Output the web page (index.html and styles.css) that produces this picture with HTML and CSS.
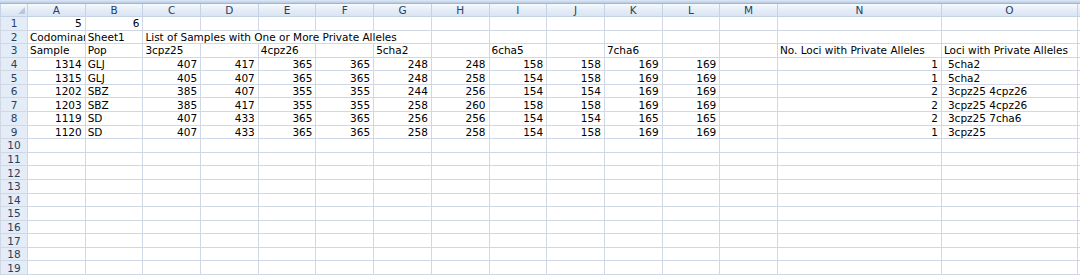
FILE: index.html
```html
<!DOCTYPE html>
<html>
<head>
<meta charset="utf-8">
<link rel="stylesheet" href="styles.css">
</head>
<body>
<div class="sheet">
  <div class="topband"></div>
  <table class="grid">
    <colgroup>
      <col class="c-rh"><col class="c-n"><col class="c-n"><col class="c-n"><col class="c-n"><col class="c-n"><col class="c-n"><col class="c-n"><col class="c-n"><col class="c-n"><col class="c-n"><col class="c-n"><col class="c-n"><col class="c-n"><col class="c-wn"><col class="c-wo"><col class="c-rest">
    </colgroup>
    <thead>
      <tr class="hdr">
        <th class="corner"><span class="tri"></span></th>
        <th>A</th><th>B</th><th>C</th><th>D</th><th>E</th><th>F</th><th>G</th><th>H</th><th>I</th><th>J</th><th>K</th><th>L</th><th>M</th><th>N</th><th>O</th><th></th>
      </tr>
    </thead>
    <tbody>
      <tr><th>1</th><td class="r">5</td><td class="r">6</td><td></td><td></td><td></td><td></td><td></td><td></td><td></td><td></td><td></td><td></td><td></td><td></td><td></td><td></td></tr>
      <tr><th>2</th><td class="clip">Codominant</td><td>Sheet1</td><td colspan="5">List of Samples with One or More Private Alleles</td><td></td><td></td><td></td><td></td><td></td><td></td><td></td><td></td><td></td></tr>
      <tr><th>3</th><td>Sample</td><td>Pop</td><td>3cpz25</td><td></td><td>4cpz26</td><td></td><td>5cha2</td><td></td><td>6cha5</td><td></td><td>7cha6</td><td></td><td></td><td>No. Loci with Private Alleles</td><td>Loci with Private Alleles</td><td></td></tr>
      <tr><th>4</th><td class="r">1314</td><td>GLJ</td><td class="r">407</td><td class="r">417</td><td class="r">365</td><td class="r">365</td><td class="r">248</td><td class="r">248</td><td class="r">158</td><td class="r">158</td><td class="r">169</td><td class="r">169</td><td></td><td class="r">1</td><td class="sp">5cha2</td><td></td></tr>
      <tr><th>5</th><td class="r">1315</td><td>GLJ</td><td class="r">405</td><td class="r">407</td><td class="r">365</td><td class="r">365</td><td class="r">248</td><td class="r">258</td><td class="r">154</td><td class="r">158</td><td class="r">169</td><td class="r">169</td><td></td><td class="r">1</td><td class="sp">5cha2</td><td></td></tr>
      <tr><th>6</th><td class="r">1202</td><td>SBZ</td><td class="r">385</td><td class="r">407</td><td class="r">355</td><td class="r">355</td><td class="r">244</td><td class="r">256</td><td class="r">154</td><td class="r">154</td><td class="r">169</td><td class="r">169</td><td></td><td class="r">2</td><td class="sp">3cpz25 4cpz26</td><td></td></tr>
      <tr><th>7</th><td class="r">1203</td><td>SBZ</td><td class="r">385</td><td class="r">417</td><td class="r">355</td><td class="r">355</td><td class="r">258</td><td class="r">260</td><td class="r">158</td><td class="r">158</td><td class="r">169</td><td class="r">169</td><td></td><td class="r">2</td><td class="sp">3cpz25 4cpz26</td><td></td></tr>
      <tr><th>8</th><td class="r">1119</td><td>SD</td><td class="r">407</td><td class="r">433</td><td class="r">365</td><td class="r">365</td><td class="r">256</td><td class="r">256</td><td class="r">154</td><td class="r">154</td><td class="r">165</td><td class="r">165</td><td></td><td class="r">2</td><td class="sp">3cpz25 7cha6</td><td></td></tr>
      <tr><th>9</th><td class="r">1120</td><td>SD</td><td class="r">407</td><td class="r">433</td><td class="r">365</td><td class="r">365</td><td class="r">258</td><td class="r">258</td><td class="r">154</td><td class="r">158</td><td class="r">169</td><td class="r">169</td><td></td><td class="r">1</td><td class="sp">3cpz25</td><td></td></tr>
      <tr><th>10</th><td></td><td></td><td></td><td></td><td></td><td></td><td></td><td></td><td></td><td></td><td></td><td></td><td></td><td></td><td></td><td></td></tr>
      <tr><th>11</th><td></td><td></td><td></td><td></td><td></td><td></td><td></td><td></td><td></td><td></td><td></td><td></td><td></td><td></td><td></td><td></td></tr>
      <tr><th>12</th><td></td><td></td><td></td><td></td><td></td><td></td><td></td><td></td><td></td><td></td><td></td><td></td><td></td><td></td><td></td><td></td></tr>
      <tr><th>13</th><td></td><td></td><td></td><td></td><td></td><td></td><td></td><td></td><td></td><td></td><td></td><td></td><td></td><td></td><td></td><td></td></tr>
      <tr><th>14</th><td></td><td></td><td></td><td></td><td></td><td></td><td></td><td></td><td></td><td></td><td></td><td></td><td></td><td></td><td></td><td></td></tr>
      <tr><th>15</th><td></td><td></td><td></td><td></td><td></td><td></td><td></td><td></td><td></td><td></td><td></td><td></td><td></td><td></td><td></td><td></td></tr>
      <tr><th>16</th><td></td><td></td><td></td><td></td><td></td><td></td><td></td><td></td><td></td><td></td><td></td><td></td><td></td><td></td><td></td><td></td></tr>
      <tr><th>17</th><td></td><td></td><td></td><td></td><td></td><td></td><td></td><td></td><td></td><td></td><td></td><td></td><td></td><td></td><td></td><td></td></tr>
      <tr><th>18</th><td></td><td></td><td></td><td></td><td></td><td></td><td></td><td></td><td></td><td></td><td></td><td></td><td></td><td></td><td></td><td></td></tr>
      <tr><th>19</th><td></td><td></td><td></td><td></td><td></td><td></td><td></td><td></td><td></td><td></td><td></td><td></td><td></td><td></td><td></td><td></td></tr>
    </tbody>
  </table>
</div>
</body>
</html>
```
FILE: styles.css
```css
html, body {
  margin: 0;
  padding: 0;
  background: #ffffff;
}
.sheet {
  width: 1080px;
  height: 277px;
  overflow: hidden;
  font-family: "DejaVu Sans", Verdana, sans-serif;
  font-size: 10.5px;
  color: #000;
}
.topband {
  height: 3px;
  background: linear-gradient(#dde8f5, #b8cce4);
  border-bottom: 1px solid #9eb6ce;
}
.grid {
  border-collapse: collapse;
  table-layout: fixed;
  width: 1092px;
}
.c-rh { width: 27px; }
.c-n { width: 57.7px; }
.c-wn { width: 164px; }
.c-wo { width: 136px; }
.c-rest { width: 15px; }
.grid th, .grid td {
  height: 12.58px;
  padding: 0 2px;
  border: 1px solid #d0d7e5;
  white-space: nowrap;
  overflow: hidden;
  line-height: 12px;
}
.hdr th {
  height: 12px;
  font-weight: normal;
  text-align: center;
  color: #27415f;
  background: linear-gradient(#f6f9fc, #e4ecf7 50%, #dae5f3);
  border: 1px solid #c5d2e4;
  border-top: none;
}
tbody th {
  font-weight: normal;
  text-align: center;
  color: #27415f;
  background: #e4ecf7;
  border-color: #c5d2e4;
}
.corner {
  position: relative;
}
.tri {
  position: absolute;
  right: 2px;
  bottom: 2px;
  width: 0;
  height: 0;
  border-left: 7px solid transparent;
  border-bottom: 7px solid #b7c8de;
}
td.r { text-align: right; padding-right: 3px; }
td.clip { overflow: hidden; text-overflow: clip; }
td.sp { padding-left: 6px; }
```
